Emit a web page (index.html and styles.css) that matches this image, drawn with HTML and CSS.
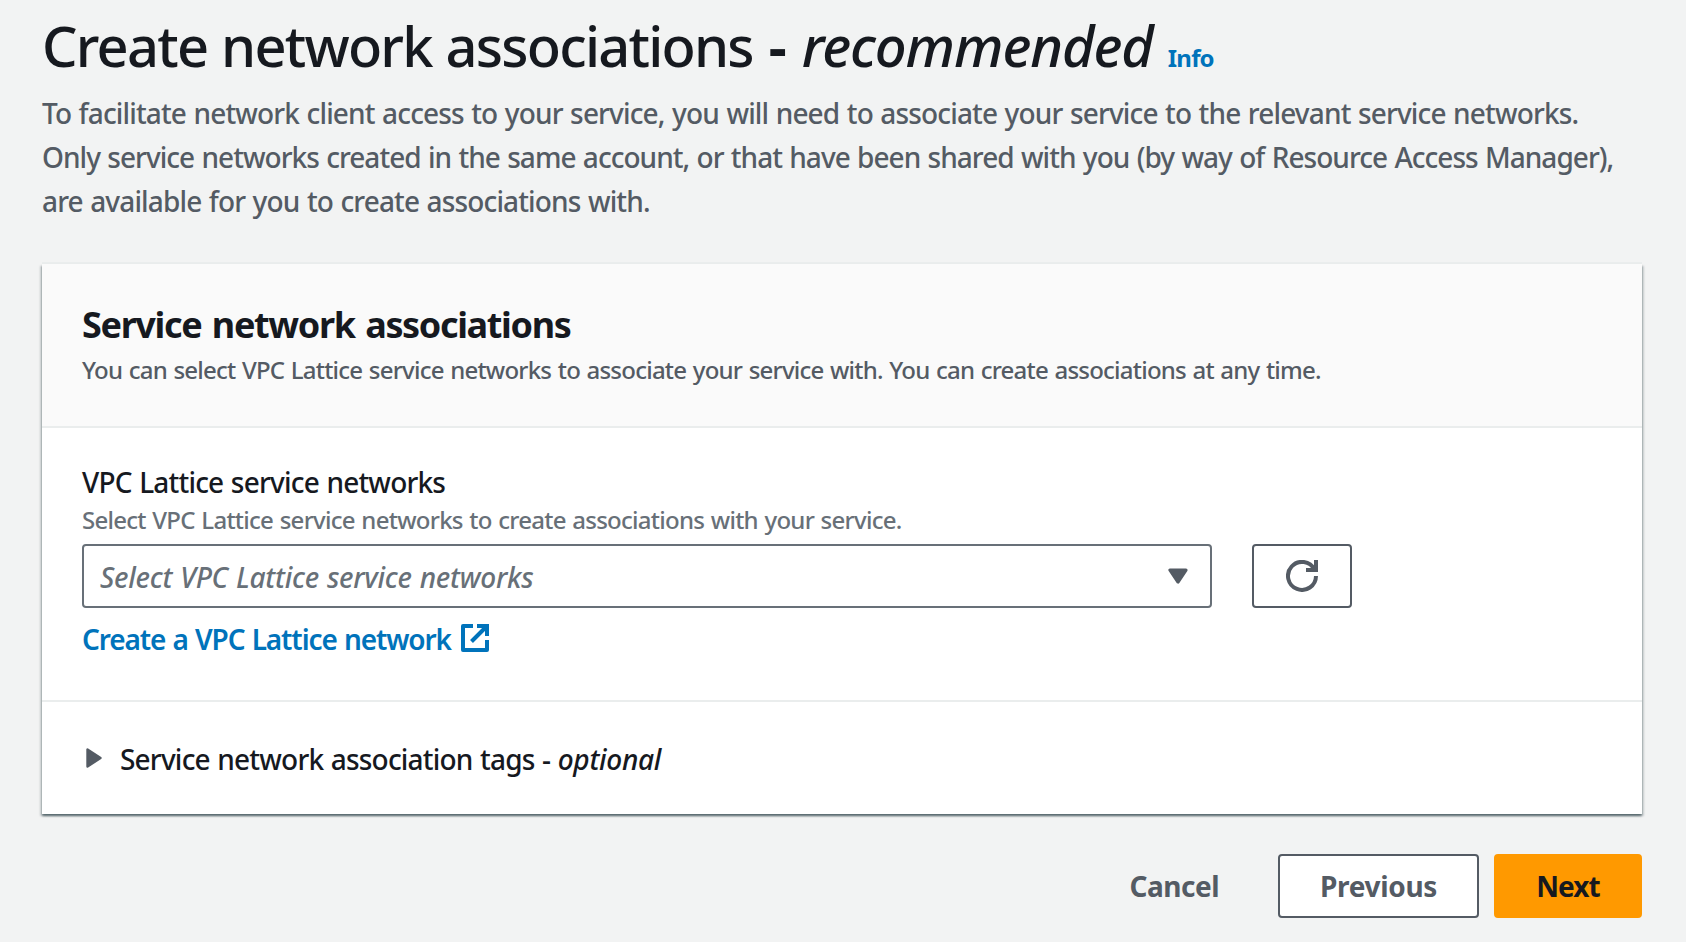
FILE: index.html
```html
<!DOCTYPE html>
<html lang="en">
<head>
<meta charset="utf-8">
<title>Create network associations</title>
<link rel="stylesheet" href="styles.css">
</head>
<body>
<main class="page">
  <header class="page-header">
    <h1 class="page-title"><span>Create network associations</span><span class="dash">-</span><em class="page-title-note">recommended</em><a class="info">Info</a></h1>
    <p class="lead">
      <span class="lead-line lead-line-1">To facilitate network client access to your service, you will need to associate your service to the relevant service networks.</span>
      <span class="lead-line lead-line-2">Only service networks created in the same account, or that have been shared with you (by way of Resource Access Manager),</span>
      <span class="lead-line lead-line-3">are available for you to create associations with.</span>
    </p>
  </header>

  <section class="card">
    <div class="card-header">
      <h2 class="card-title">Service network associations</h2>
      <p class="card-sub">You can select VPC Lattice service networks to associate your service with. You can create associations at any time.</p>
    </div>
    <div class="card-body">
      <div class="label">VPC Lattice service networks</div>
      <div class="hint">Select VPC Lattice service networks to create associations with your service.</div>
      <div class="field-row">
        <div class="select">
          <span class="placeholder">Select VPC Lattice service networks</span>
          <svg class="caret" width="20" height="16" viewBox="0 0 20 16"><path d="M2 2H18L10 14Z" fill="#545b64" stroke="#545b64" stroke-width="3.2" stroke-linejoin="round"/></svg>
        </div>
        <button class="btn refresh" aria-label="Refresh">
          <svg width="32" height="32" viewBox="0 0 32 32" fill="none" stroke="#545b64" stroke-width="4"><path d="M30 16A14 14 0 1 1 28.500 9.600"/><path d="M30 0V10H20"/></svg>
        </button>
      </div>
      <a class="link"><span>Create a VPC Lattice network</span>
        <svg class="external" width="28" height="28" viewBox="0 0 28 28" fill="none" stroke="#0073bb" stroke-width="4"><path d="M12 2H2V26H26V16" stroke-linejoin="round"/><path d="M16 2H26V12"/><path d="M26 2L10.500 17.500"/></svg>
      </a>
    </div>
    <div class="expander">
      <svg class="arrow" width="16" height="20" viewBox="0 0 16 20"><path d="M1.500 1.500V18.500L14.500 10Z" fill="#545b64" stroke="#545b64" stroke-width="2.400" stroke-linejoin="round"/></svg>
      <span class="expander-label">Service network association tags - <em class="optional">optional</em></span>
    </div>
  </section>

  <footer class="actions">
    <button class="btn cancel">Cancel</button>
    <button class="btn previous">Previous</button>
    <button class="btn next">Next</button>
  </footer>
</main>
</body>
</html>
```
FILE: styles.css
```css
* { box-sizing: border-box; }
body {
  margin: 0;
  background: #f2f3f3;
  color: #16191f;
  font-family: "Noto Sans", "Open Sans", sans-serif;
  font-size: 28px;
  font-weight: 500;
  letter-spacing: -.8px;
  word-spacing: 1px;
  white-space: nowrap;
}
h1, h2, p { margin: 0; }
.page { padding: 9px 44px 0 42px; }
.page-title {
  display: flex;
  align-items: baseline;
  font-size: 56px;
  line-height: 72px;
  font-weight: 500;
  letter-spacing: -1.77px;
  word-spacing: 1px;
}
.dash { width: 22px; margin: 0 13px 0 14px; text-align: center; font-weight: 700; letter-spacing: 0; }
.page-title-note { letter-spacing: -1.1px; }
.info {
  margin-left: 15px;
  font-size: 24px;
  line-height: 36px;
  font-weight: 700;
  letter-spacing: -.8px;
  color: #0073bb;
}
.lead { margin-top: 9px; padding-top: 1px; color: #545b64; line-height: 44px; }
.lead-line { display: block; }
.lead-line-1 { letter-spacing: -.85px; }
.lead-line-2 { letter-spacing: -.97px; }
.lead-line-3 { letter-spacing: -.86px; }
.card {
  margin-top: 41px;
  background: #fff;
  box-shadow: 0 2px 2px 0 rgba(0, 28, 36, .5), 2px 2px 2px 0 rgba(0, 28, 36, .15), -2px 2px 2px 0 rgba(0, 28, 36, .15), 0 -2px 0 0 #eaeded;
}
.card-header {
  height: 164px;
  padding: 39px 40px 0;
  background: #fafafa;
  border-bottom: 2px solid #eaeded;
}
.card-title { font-size: 36px; line-height: 44px; font-weight: 700; letter-spacing: -1.35px; word-spacing: 2.5px; }
.card-sub { margin-top: 5px; font-size: 24px; line-height: 36px; color: #545b64; letter-spacing: -.77px; }
.card-body { padding: 36px 40px 42px; }
.label { line-height: 36px; }
.hint { margin: 4px 0 8px; font-size: 24px; line-height: 32px; color: #687078; letter-spacing: -.73px; }
.field-row { display: flex; gap: 40px; }
.select {
  display: flex;
  align-items: center;
  justify-content: space-between;
  width: 1130px;
  height: 64px;
  padding: 0 22px 0 16px;
  border: 2px solid #687078;
  border-radius: 4px;
}
.placeholder { padding-top: 1px; font-style: italic; color: #687078; letter-spacing: -.26px; }
.btn {
  display: flex;
  align-items: center;
  justify-content: center;
  height: 64px;
  padding: 0;
  border: 2px solid #545b64;
  border-radius: 4px;
  background: #fff;
  color: #545b64;
  font: inherit;
  font-weight: 700;
  letter-spacing: -.3px;
}
.refresh { width: 100px; }
.link {
  display: flex;
  align-items: center;
  gap: 10px;
  margin-top: 10px;
  height: 40px;
  line-height: 40px;
  letter-spacing: -1.1px;
  font-weight: 600;
  color: #0073bb;
}
.link span { padding-top: 1px; }
.expander {
  display: flex;
  align-items: center;
  height: 114px;
  padding-left: 44px;
  border-top: 2px solid #eaeded;
}
.expander-label { margin-left: 18px; padding-top: 1px; }
.optional { letter-spacing: -.3px; }
.actions { display: flex; justify-content: flex-end; margin-top: 40px; }
.cancel { margin-right: 59px; border: 0; background: none; letter-spacing: -.5px; }
.previous { width: 201px; margin-right: 15px; }
.next { width: 148px; border-color: #ff9900; background: #ff9900; color: #16191f; letter-spacing: -.9px; }
```
